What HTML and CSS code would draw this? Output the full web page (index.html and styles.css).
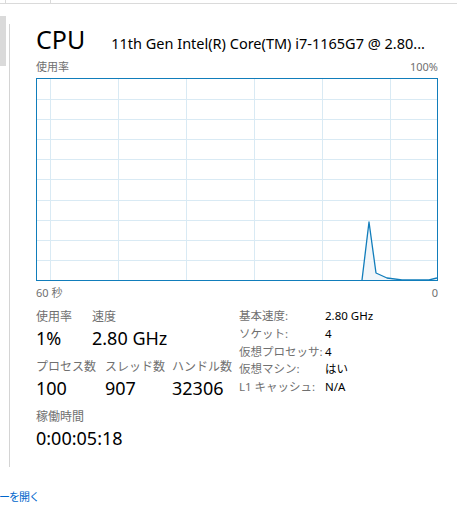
FILE: index.html
```html
<!DOCTYPE html>
<html lang="ja">
<head>
    <meta charset="UTF-8">
    <meta name="viewport" content="width=device-width, initial-scale=1.0">
    <title>CPU</title>
    <link rel="stylesheet" href="styles.css">
</head>
<body>

<!-- タブ列 (上端だけ見えている) -->
<div class="tabs">
    <div class="tab tab-first"></div>
    <div class="tab tab-second"></div>
</div>

<div class="layout">
    <!-- 左ペインのスクロールバー -->
    <div class="sidebar">
        <div class="thumb"></div>
    </div>

    <div class="panel">
        <div class="header">
            <span class="title">CPU</span>
            <span class="model">11th Gen Intel(R) Core(TM) i7-1165G7 @ 2.80...</span>
        </div>

        <div class="axis axis-top">
            <span>使用率</span>
            <span>100%</span>
        </div>

        <div class="graph">
            <svg width="400" height="201" viewBox="0 0 400 201">
                <g class="grid">
                    <line x1="13.5" y1="0" x2="13.5" y2="201"/>
                    <line x1="81.5" y1="0" x2="81.5" y2="201"/>
                    <line x1="149.5" y1="0" x2="149.5" y2="201"/>
                    <line x1="217.5" y1="0" x2="217.5" y2="201"/>
                    <line x1="285.5" y1="0" x2="285.5" y2="201"/>
                    <line x1="353.5" y1="0" x2="353.5" y2="201"/>
                    <line x1="0" y1="20.5" x2="400" y2="20.5"/>
                    <line x1="0" y1="40.5" x2="400" y2="40.5"/>
                    <line x1="0" y1="60.5" x2="400" y2="60.5"/>
                    <line x1="0" y1="80.5" x2="400" y2="80.5"/>
                    <line x1="0" y1="100.5" x2="400" y2="100.5"/>
                    <line x1="0" y1="121.5" x2="400" y2="121.5"/>
                    <line x1="0" y1="141.5" x2="400" y2="141.5"/>
                    <line x1="0" y1="161.5" x2="400" y2="161.5"/>
                    <line x1="0" y1="181.5" x2="400" y2="181.5"/>
                </g>
                <polygon class="area" points="325,201 332,143 339,194 350,199 365,201 392,201 400,199 400,201"/>
                <polyline class="usage" points="325,201 332,143 339,194 350,199 365,201 392,201 400,199"/>
            </svg>
        </div>

        <div class="axis axis-bottom">
            <span>60 秒</span>
            <span>0</span>
        </div>

        <div class="details">
            <div class="stats">
                <div class="stat-row">
                    <div class="stat w-56">
                        <p class="label">使用率</p>
                        <p class="value">1%</p>
                    </div>
                    <div class="stat">
                        <p class="label">速度</p>
                        <p class="value">2.80 GHz</p>
                    </div>
                </div>
                <div class="stat-row">
                    <div class="stat w-69">
                        <p class="label">プロセス数</p>
                        <p class="value">100</p>
                    </div>
                    <div class="stat w-67">
                        <p class="label">スレッド数</p>
                        <p class="value">907</p>
                    </div>
                    <div class="stat">
                        <p class="label">ハンドル数</p>
                        <p class="value">32306</p>
                    </div>
                </div>
                <div class="stat-row">
                    <div class="stat">
                        <p class="label">稼働時間</p>
                        <p class="value">0:00:05:18</p>
                    </div>
                </div>
            </div>

            <table class="info">
                <tr><td class="key">基本速度:</td><td>2.80 GHz</td></tr>
                <tr><td class="key">ソケット:</td><td>4</td></tr>
                <tr><td class="key">仮想プロセッサ:</td><td>4</td></tr>
                <tr><td class="key">仮想マシン:</td><td>はい</td></tr>
                <tr><td class="key">L1 キャッシュ:</td><td>N/A</td></tr>
            </table>
        </div>
    </div>
</div>

<div class="footer">
    <a href="#" class="monitor-link">リソース モニターを開く</a>
</div>

</body>
</html>
```

FILE: styles.css
```css
body {
    font-family: 'Noto Sans', 'Noto Sans CJK JP', sans-serif;
    margin: 0;
    padding: 0;
    background: #fff;
    color: #000;
    width: 457px;
    height: 516px;
    overflow: hidden;
}
.tabs {
    display: flex;
    height: 3px;
    border-bottom: 1px solid #dadada;
}
.tab {
    height: 3px;
    border-right: 1px solid #dadada;
}
.tab-first {
    width: 5px;
}
.tab-second {
    width: 44px;
}
.layout {
    display: flex;
}
.sidebar {
    width: 9px;
}
.thumb {
    width: 6px;
    height: 50px;
    margin-top: 12px;
    background: #dadada;
}
.panel {
    margin-top: 20px;
    height: 443px;
    border-left: 1px solid #d4d4d4;
    padding-left: 26px;
    width: 402px;
}
.header {
    display: flex;
    align-items: baseline;
    height: 34px;
    white-space: nowrap;
}
.title {
    font-size: 25px;
    line-height: 30px;
    font-weight: 400;
}
.model {
    font-size: 14.5px;
    margin-left: 26px;
    width: 330px;
    overflow: hidden;
    text-overflow: ellipsis;
}
.axis {
    display: flex;
    justify-content: space-between;
    font-size: 11px;
    line-height: 16px;
    color: #707070;
}
.axis-top {
    height: 20px;
    padding-top: 1px;
    box-sizing: border-box;
}
.axis-bottom {
    margin-top: 4px;
}
.graph {
    width: 400px;
    height: 201px;
    border: 1px solid #117dbb;
}
.graph svg {
    display: block;
}
.grid line {
    stroke: #d9eaf4;
    stroke-width: 1;
}
.area {
    fill: #f1f6fa;
}
.usage {
    fill: none;
    stroke: #117dbb;
    stroke-width: 1.3;
    stroke-linejoin: round;
}
.details {
    display: flex;
    align-items: flex-start;
    margin-top: 7px;
}
.stats {
    width: 203px;
}
.stat-row {
    display: flex;
    margin-bottom: 7px;
}
.w-56 {
    width: 56px;
}
.w-69 {
    width: 69px;
}
.w-67 {
    width: 67px;
}
.label {
    margin: 0;
    font-size: 12px;
    line-height: 17px;
    color: #707070;
}
.value {
    margin: 0;
    font-size: 18px;
    line-height: 26px;
}
.info {
    border-collapse: collapse;
    font-size: 11.5px;
    margin-top: -1px;
}
.info td {
    padding: 0;
    height: 17.7px;
    line-height: 17px;
}
.info .key {
    width: 86px;
    color: #707070;
}
.footer {
    display: flex;
    justify-content: flex-end;
    width: 39px;
    overflow: hidden;
    margin-top: 21px;
    white-space: nowrap;
}
.monitor-link {
    flex-shrink: 0;
    font-size: 11px;
    letter-spacing: -1px;
    color: #0066cc;
    text-decoration: none;
}
```
